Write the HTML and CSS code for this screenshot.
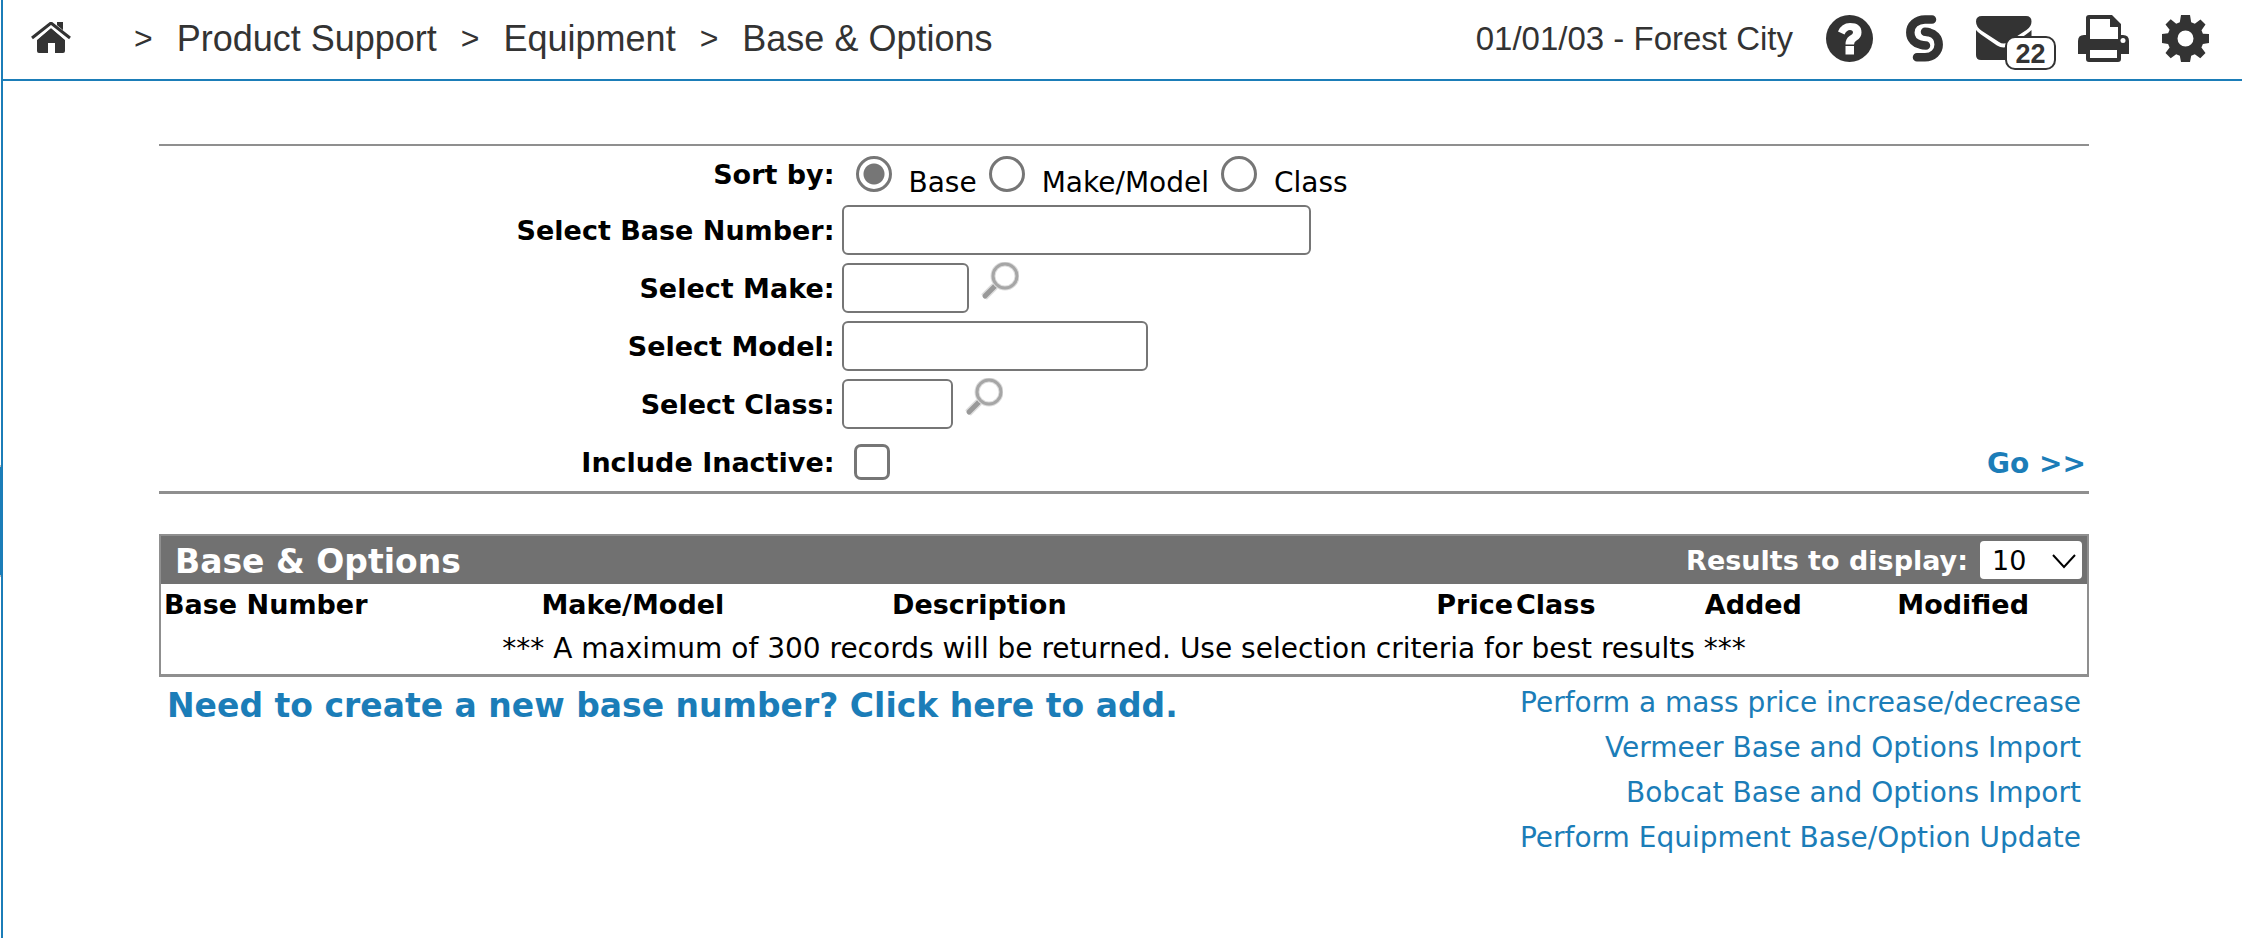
FILE: index.html
```html
<!DOCTYPE html>
<html lang="en">
<head>
  <meta charset="UTF-8" />
  <title>Base &amp; Options</title>
  <meta name="viewport" content="width=device-width, initial-scale=1.0" />
  <link rel="stylesheet" href="styles.css">
</head>
<body>
  <button class="menu-tab" aria-label="Open menu"></button>

  <div class="page">
    <header class="topbar">
      <nav class="breadcrumb">
        <a class="home" href="#" aria-label="Home">
          <svg width="40" height="32" viewBox="0 0 40 32">
            <path d="M6 18 20 6l14 12v11q0 2-2 2H24V21h-7v10H8q-2 0-2-2z" />
            <path d="M26 0h6v11l-6-5z" />
            <path d="M2 17 20 2l18 15" fill="none" stroke="#fff" stroke-width="6" />
            <path d="M1 16 20 1l19 15" fill="none" stroke="#333" stroke-width="3" stroke-linejoin="round" />
          </svg>
        </a>
        <span class="sep">&gt;</span>
        <a href="#">Product Support</a>
        <span class="sep">&gt;</span>
        <a href="#">Equipment</a>
        <span class="sep">&gt;</span>
        <a href="#">Base &amp; Options</a>
      </nav>

      <div class="tools">
        <span class="location">01/01/03 - Forest City</span>
        <button aria-label="Help">
          <svg width="47" height="47" viewBox="0 0 47 47">
            <circle cx="23.5" cy="23.5" r="23.5" />
            <path d="M12 16.500Q15.500 8 24 8q11.500 0 11.500 9.500 0 5-5 8-2.500 1.500-2.500 4h-8.500q0-6 4-8.500 3.500-2 3.500-3.500 0-2.500-3-2.500-3.500 0-5.500 4.500zM19.500 31h8.500v8.500h-8.500z" fill="#fff" />
          </svg>
        </button>
        <button aria-label="Shortcuts">
          <svg width="37" height="47" viewBox="0 0 37 47">
            <g fill="none" stroke="#333" stroke-width="8.5" stroke-linecap="round">
              <path d="M26 4.500H19C10.500 4.500 4.300 10 4.300 17.500S10 28.500 14 29.500q3 1 6 1" />
              <path d="M11 42.200h8c8 0 13.700-5.500 13.700-12.700S27.500 18.500 23.500 17.500q-2-.8-4.500-.8" />
            </g>
          </svg>
        </button>
        <button class="mail" aria-label="Messages, 22 unread">
          <svg width="56" height="44" viewBox="0 0 56 44">
            <path d="M6 0h44q5.500 0 5.500 5.500 0 5-5 8.500L32 26q-4.500 3-9 0L6 15Q0 11 0 5.500 0 0 6 0z" />
            <path d="M0 14q2 2.500 5 4.500l16 11q6.500 4 13 0l16-11q3.500-2.500 5.500-4.500v25q0 5-5 5H5q-5 0-5-5z" />
          </svg>
          <span class="badge">22</span>
        </button>
        <button aria-label="Print">
          <svg width="51" height="47" viewBox="0 0 51 47">
            <path d="M11 0h23l9 9v11h2q6 0 6 6v13h-8v5q0 3-3 3H11q-3 0-3-3v-5H0V26q0-6 6-6h2V3q0-3 3-3z" />
            <path d="M12 4h20v8h8v12H12zM12 35h27v8H12z" fill="#fff" />
            <circle cx="45" cy="25.500" r="2.500" fill="#fff" />
          </svg>
        </button>
        <button aria-label="Settings">
          <svg width="47" height="47" viewBox="0 0 47 47">
            <path fill-rule="evenodd" d="M19 0h9l1.200 7.200 3.600 1.500L38.500 4.500l5 5-4 5.800 1.400 3.500L47 19v9l-6.100 1-1.500 3.600 4.100 5.400-5.200 5.200-5.500-4-3.600 1.500L28 47h-9l-1.200-6.300-3.600-1.500-5.500 4L3.500 38l4.100-5.400L6.100 29 0 28v-9l6.100-.8 1.500-3.500-4.100-5.200 5.200-5.200 5.500 4.400 3.600-1.500zM23.500 15.500a8 8 0 1 0 0 16 8 8 0 0 0 0-16z" />
          </svg>
        </button>
      </div>
    </header>

    <main class="content">
      <form class="search">
        <div class="row sort-row">
          <span class="label">Sort by:</span>
          <div class="options">
            <input type="radio" name="sort" id="sort-base" checked><label for="sort-base">Base</label>
            <input type="radio" name="sort" id="sort-make"><label for="sort-make">Make/Model</label>
            <input type="radio" name="sort" id="sort-class"><label for="sort-class">Class</label>
          </div>
        </div>
        <div class="row">
          <label class="label" for="base">Select Base Number:</label>
          <input class="text base" type="text" id="base">
        </div>
        <div class="row">
          <label class="label" for="make">Select Make:</label>
          <input class="text make" type="text" id="make">
          <button type="button" class="lookup" aria-label="Look up make">
            <svg width="38" height="38" viewBox="0 0 38 38"><use href="#magnifier" /></svg>
          </button>
        </div>
        <div class="row">
          <label class="label" for="model">Select Model:</label>
          <input class="text model" type="text" id="model">
        </div>
        <div class="row">
          <label class="label" for="class">Select Class:</label>
          <input class="text class" type="text" id="class">
          <button type="button" class="lookup" aria-label="Look up class">
            <svg width="38" height="38" viewBox="0 0 38 38">
              <g id="magnifier" fill="none">
                <path d="M14 24 3 35" stroke="#ddd" stroke-width="8" />
                <path d="M14 24 4 34" stroke="#999" stroke-width="5" stroke-linecap="round" />
                <circle cx="24" cy="14" r="12" stroke="#ddd" stroke-width="5" />
                <circle cx="24" cy="14" r="12" stroke="#a6a6a6" stroke-width="3" />
              </g>
            </svg>
          </button>
        </div>
        <div class="row">
          <label class="label" for="inactive">Include Inactive:</label>
          <input type="checkbox" id="inactive">
          <a class="go" href="#">Go &gt;&gt;</a>
        </div>
      </form>

      <section class="results">
        <div class="results-bar">
          <h2>Base &amp; Options</h2>
          <div class="page-size">
            <label for="count">Results to display:</label>
            <div class="select">
              <select id="count">
                <option>10</option>
                <option>25</option>
                <option>50</option>
              </select>
              <svg width="24" height="18" viewBox="0 0 24 18"><path d="M1 2l11 12L23 2" fill="none" stroke="#000" stroke-width="2" /></svg>
            </div>
          </div>
        </div>
        <table>
          <thead>
            <tr>
              <th class="col-base">Base Number</th>
              <th class="col-make">Make/Model</th>
              <th class="col-desc">Description</th>
              <th class="col-price">Price</th>
              <th class="col-class">Class</th>
              <th class="col-added">Added</th>
              <th class="col-modified">Modified</th>
            </tr>
          </thead>
          <tbody>
            <tr>
              <td colspan="7">*** A maximum of 300 records will be returned. Use selection criteria for best results ***</td>
            </tr>
          </tbody>
        </table>
      </section>

      <div class="links">
        <a class="add" href="#">Need to create a new base number? Click here to add.</a>
        <div class="more">
          <a href="#">Perform a mass price increase/decrease</a>
          <a href="#">Vermeer Base and Options Import</a>
          <a href="#">Bobcat Base and Options Import</a>
          <a href="#">Perform Equipment Base/Option Update</a>
        </div>
      </div>
    </main>
  </div>
</body>
</html>
```
FILE: styles.css
```css
:root {
  --blue: #1b7db8;
  --dark: #333;
  --grey: #8f8f8f;
  --field: #767676;
}

* {
  box-sizing: border-box;
}

body {
  margin: 0;
  background: #fff;
  color: #000;
  font-family: "DejaVu Sans", Verdana, sans-serif;
  font-size: 28px;
  line-height: 45px;
}

a {
  color: var(--blue);
  text-decoration: none;
}

button {
  border: none;
  background: none;
  padding: 0;
  cursor: pointer;
}

svg {
  display: block;
  fill: var(--dark);
}

.page {
  margin-left: 1px;
  border-left: 2px solid var(--blue);
  min-height: 100vh;
}

.menu-tab {
  position: absolute;
  left: 0;
  top: 465px;
  width: 1px;
  height: 112px;
  background: var(--blue);
  border: solid #bbb;
  border-width: 2px 0;
}

/* top bar */
.topbar {
  display: flex;
  align-items: center;
  justify-content: space-between;
  height: 81px;
  padding: 0 33px 3px 28px;
  border-bottom: 2px solid var(--blue);
  font-family: Arial, "Liberation Sans", sans-serif;
  color: var(--dark);
}

.breadcrumb {
  display: flex;
  align-items: center;
  gap: 24px;
  font-size: 36px;
}

.breadcrumb a {
  color: var(--dark);
}

.home {
  margin-right: 39px;
}

.sep {
  font-size: 32px;
}

.tools {
  display: flex;
  align-items: center;
  gap: 33px;
}

.location {
  font-size: 33px;
}

.mail {
  position: relative;
  width: 69px;
}

.badge {
  position: absolute;
  right: -11px;
  top: 20px;
  width: 51px;
  height: 34px;
  border: 2px solid var(--dark);
  border-radius: 10px;
  background: #fff;
  color: var(--dark);
  font: bold 27px/32px Arial, "Liberation Sans", sans-serif;
  text-align: center;
}

/* search form */
.content {
  padding: 63px 153px 0 156px;
}

.search {
  border-top: 2px solid var(--grey);
  border-bottom: 3px solid var(--grey);
}

.row {
  display: flex;
  align-items: center;
  height: 58px;
}

.sort-row {
  height: 55px;
  padding-top: 1px;
}

.label {
  width: 35%;
  padding-top: 1px;
  margin-right: 7px;
  text-align: right;
  font-size: 27px;
  font-weight: bold;
}

.text {
  height: 50px;
  border: 2px solid var(--field);
  border-radius: 6px;
  padding: 0 6px;
  font: inherit;
}

.base {
  width: 469px;
}

.make {
  width: 127px;
}

.model {
  width: 306px;
}

.class {
  width: 111px;
}

.lookup {
  align-self: flex-start;
  margin: 3px 0 0 12px;
}

input[type="radio"],
input[type="checkbox"] {
  appearance: none;
  width: 36px;
  height: 36px;
  margin: 0 0 0 12px;
  border: 3px solid var(--field);
  background: #fff;
}

input[type="checkbox"] {
  border-radius: 7px;
}

input[type="radio"] {
  border-radius: 50%;
}

input[type="radio"]:checked {
  background: radial-gradient(circle, var(--field) 10px, #fff 11px);
}

.options {
  display: flex;
  align-items: center;
  margin-left: 2px;
}

.options label {
  padding: 16px 0 0 17px;
}

.go {
  margin-left: auto;
  padding: 2px 3px 0 0;
  font-weight: bold;
}

/* results */
.results {
  margin-top: 40px;
  border: 2px solid var(--grey);
  border-bottom-width: 3px;
}

.results-bar {
  display: flex;
  align-items: center;
  justify-content: space-between;
  height: 48px;
  padding: 0 5px 0 14px;
  background: #717171;
  color: #fff;
  font-weight: bold;
}

.results-bar h2 {
  margin: 0;
  padding-top: 2px;
  font-size: 33px;
}

.page-size {
  display: flex;
  align-items: center;
  gap: 12px;
  font-size: 27px;
}

.select {
  position: relative;
}

.select select {
  display: block;
  appearance: none;
  width: 102px;
  height: 38px;
  border: none;
  border-radius: 4px;
  padding: 0 12px;
  background: #fff;
  color: #000;
  font: 27px "DejaVu Sans", Verdana, sans-serif;
}

.select svg {
  position: absolute;
  right: 6px;
  top: 12px;
  pointer-events: none;
}

table {
  width: 100%;
  table-layout: fixed;
  border-collapse: collapse;
}

th {
  height: 42px;
  padding: 0 0 0 3px;
  text-align: left;
  font-size: 27px;
  line-height: 42px;
}

td {
  height: 48px;
  padding: 0 0 2px;
  text-align: center;
  line-height: 46px;
}

.col-base {
  width: 19.6%;
}

.col-make {
  width: 18.2%;
}

.col-desc {
  width: 22.2%;
}

.col-price {
  width: 10.2%;
  text-align: right;
}

.col-class {
  width: 9.8%;
}

.col-added,
.col-modified {
  width: 10%;
}

/* links under the table */
.links {
  display: flex;
  justify-content: space-between;
  padding: 3px 8px 0;
}

.add {
  padding-top: 3px;
  font-size: 33px;
  font-weight: bold;
}

.more {
  display: flex;
  flex-direction: column;
  align-items: flex-end;
}
```
